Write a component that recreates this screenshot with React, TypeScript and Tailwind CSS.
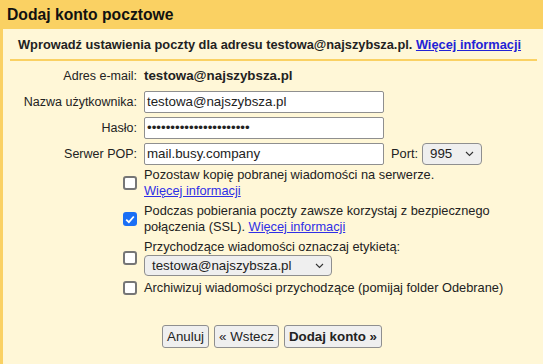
import React from "react";

const Chevron = () => (
  <svg width="9" height="6" viewBox="0 0 9 6" fill="none">
    <path d="M1 1 L4.5 4.5 L8 1" stroke="#333" strokeWidth="1.1" />
  </svg>
);

const Check = ({ checked }: { checked?: boolean }) =>
  checked ? (
    <div className="w-[14px] h-[14px] rounded-[3px] bg-[#1a6ff5] flex items-center justify-center">
      <svg width="10" height="9" viewBox="0 0 10 9" fill="none">
        <path d="M1.2 4.6 L3.9 7.2 L8.8 1.5" stroke="white" strokeWidth="1.8" />
      </svg>
    </div>
  ) : (
    <div className="w-[14px] h-[14px] rounded-[3px] border-2 border-[#767676] bg-white" />
  );

const Row = ({
  label,
  children,
  className = "",
}: {
  label: React.ReactNode;
  children: React.ReactNode;
  className?: string;
}) => (
  <div className={"flex items-center " + className}>
    <div className="w-[137px] shrink-0 flex justify-end pr-[3px] text-right text-[12.5px]">{label}</div>
    <div className="pl-1 flex items-center">{children}</div>
  </div>
);

const Input = ({ value }: { value: string }) => (
  <div className="w-[240px] h-[22px] bg-white border border-[#8f8f8f] rounded-[2px] pl-[2px] flex items-center text-[13.33px]">
    {value}
  </div>
);

const Btn = ({ children, bold }: { children: React.ReactNode; bold?: boolean }) => (
  <div
    className={
      "h-[23px] px-[4px] bg-[#efefef] border border-[#8f8f8f] rounded-[3px] flex items-center text-[13.33px] " +
      (bold ? "font-bold" : "")
    }
  >
    {children}
  </div>
);

export default function App() {
  return (
    <div
      className="w-[543px] h-[364px] bg-[#fff7d7] text-[#222] text-[12.8px] leading-[16px]"
      style={{ fontFamily: '"Liberation Sans", Arial, sans-serif' }}
    >
      <div className="h-[29px] bg-[#fad163] pl-[7px] flex items-center text-[15.7px] font-bold text-[#111]">
        Dodaj konto pocztowe
      </div>
      <div className="border-l-[3px] border-[#fad163] h-[335px]">
        <div className="mx-[7px] border-b-2 border-[#fad163] h-[32px] pl-[8px] pt-[8px] w-[527px] font-bold text-[12.8px]">
          Wprowadź ustawienia poczty dla adresu testowa@najszybsza.pl.{" "}
          <span className="text-[#2323d6] underline">Więcej informacji</span>
        </div>

        <Row label="Adres e-mail:" className="mt-[7px] h-[16px]">
          <span className="font-bold text-[13.33px]">testowa@najszybsza.pl</span>
        </Row>
        <Row label="Nazwa użytkownika:" className="mt-[7px]">
          <Input value="testowa@najszybsza.pl" />
        </Row>
        <Row label="Hasło:" className="mt-[4px]">
          <Input value="••••••••••••••••••••••" />
        </Row>
        <Row label="Serwer POP:" className="mt-[4px]">
          <Input value="mail.busy.company" />
          <span className="ml-[7px]">Port:</span>
          <div className="ml-[4px] w-[60px] h-[22px] bg-[#efefef] border border-[#8f8f8f] rounded-[4px] pl-[7px] pr-[7px] flex items-center justify-between text-[13.33px]">
            <span>995</span>
            <Chevron />
          </div>
        </Row>

        <Row label={<Check />} className="mt-[2px]">
          <div>
            <div>Pozostaw kopię pobranej wiadomości na serwerze.</div>
            <div className="text-[#2f2fe6] underline">Więcej informacji</div>
          </div>
        </Row>
        <Row label={<Check checked />} className="mt-[4px]">
          <div>
            <div>Podczas pobierania poczty zawsze korzystaj z bezpiecznego</div>
            <div>
              połączenia (SSL). <span className="text-[#2f2fe6] underline">Więcej informacji</span>
            </div>
          </div>
        </Row>
        <Row label={<Check />} className="mt-[4px]">
          <div>
            <div>Przychodzące wiadomości oznaczaj etykietą:</div>
            <div className="w-[188px] h-[21px] bg-[#efefef] border border-[#8f8f8f] rounded-[4px] pl-[7px] pr-[7px] flex items-center justify-between text-[13.33px]">
              <span>testowa@najszybsza.pl</span>
              <Chevron />
            </div>
          </div>
        </Row>
        <Row label={<Check />} className="mt-[4px]">
          <div>Archiwizuj wiadomości przychodzące (pomijaj folder Odebrane)</div>
        </Row>

        <div className="mt-[29px] pl-[159px] flex gap-[5px]">
          <Btn>Anuluj</Btn>
          <Btn>« Wstecz</Btn>
          <Btn bold>Dodaj konto »</Btn>
        </div>
      </div>
    </div>
  );
}
